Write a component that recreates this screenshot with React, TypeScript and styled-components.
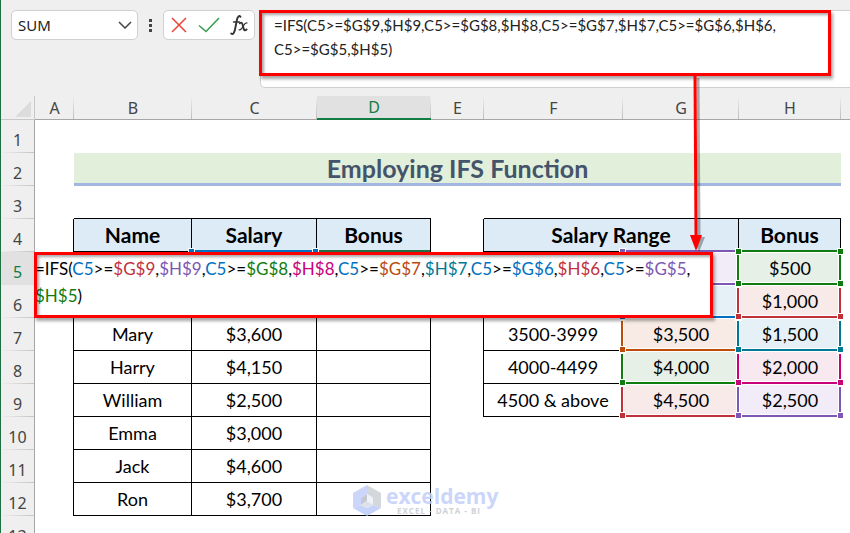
import React from "react";
import styled, { createGlobalStyle, css } from "styled-components";

const GlobalStyle = createGlobalStyle`
  *, *::before, *::after { box-sizing: border-box; }
  body { margin: 0; background: #fff; font-family: Lato, sans-serif; color: #000; }
  button, input, textarea { font: inherit; color: inherit; border: 0; background: none; padding: 0; margin: 0; outline: none; }
`;

const cellFont = "Lato, sans-serif";
const uiFont = '"Noto Sans", sans-serif';

const Window = styled.div`
  height: 100vh;
  overflow: hidden;
  display: flex;
  flex-direction: column;
  border-left: 1px solid #1e7145;
`;

const Toolbar = styled.header`
  display: flex;
  align-items: flex-start;
  padding: 10px 0 8px 10px;
  background: #efefef;
`;

const Panel = styled.div`
  display: flex;
  align-items: center;
  height: 30px;
  background: #fff;
  border: 1px solid #d0d0d0;
  border-radius: 5px;
`;

const NameBox = styled(Panel)`
  width: 127px;
  padding: 0 5px 0 6px;
`;

const NameInput = styled.input`
  flex: 1;
  min-width: 0;
  font-family: ${uiFont};
  font-size: 15px;
  color: #222;
`;

const IconButton = styled.button`
  display: flex;
  align-items: center;
  justify-content: center;
  flex: none;
  height: 28px;
`;

const Dots = styled.div`
  display: flex;
  flex-direction: column;
  gap: 2px;
  padding: 9px 11px 0;
  i { width: 3px; height: 3px; background: #444; }
`;

const Actions = styled(Panel)`
  width: 92px;
  padding: 0 6px;
  justify-content: space-between;
`;

const FormulaBar = styled.div`
  position: relative;
  flex: 1;
  height: 78px;
  margin-left: 5px;
  background: #fff;
  border: 1px solid #d0d0d0;
  border-right: 0;
  border-radius: 5px 0 0 5px;
`;

const FormulaText = styled.textarea`
  display: block;
  width: 100%;
  height: 70px;
  padding: 2px 0 0 13px;
  resize: none;
  overflow: hidden;
  white-space: pre;
  font-family: ${cellFont};
  font-size: 15px;
  line-height: 24px;
  color: #222;
`;

const redFrame = css`
  border: 3px solid #fe0000;
  box-shadow: 2px 3px 3px rgba(0, 0, 0, 0.35), inset 2px 2px 3px rgba(0, 0, 0, 0.35);
  pointer-events: none;
`;

const FormulaFrame = styled.div`
  position: absolute;
  z-index: 60;
  inset: -1px 19px 11px -2px;
  ${redFrame}
`;

const Arrow = styled.svg`
  position: absolute;
  top: 100%;
  left: 424px;
  overflow: visible;
`;

const Sheet = styled.table`
  width: 100%;
  table-layout: fixed;
  border-collapse: separate;
  border-spacing: 0;
  th, td { padding: 0; }
`;

const ColHead = styled.th<{ $active?: boolean; $last?: boolean }>`
  height: 24px;
  font-family: ${uiFont};
  font-weight: 400;
  font-size: 16px;
  line-height: 20px;
  color: ${(p) => (p.$active ? "#107c41" : "#444")};
  background-color: ${(p) => (p.$active ? "#e1e1e1" : "#efefef")};
  background-image: ${(p) => (p.$last ? "none" : "linear-gradient(#efefef, #bdbdbd)")};
  background-size: 1px 100%;
  background-position: right top;
  background-repeat: no-repeat;
  border-bottom: ${(p) => (p.$active ? "2px solid #107c41" : "1px solid #a6a6a6")};
`;

const Corner = styled.th`
  height: 24px;
  background: #efefef;
  border-right: 1px solid #c8c8c8;
  border-bottom: 1px solid #c8c8c8;
  svg { display: block; margin: 3px 3px 0 auto; }
`;

const RowHead = styled.th<{ $active?: boolean }>`
  height: 33px;
  vertical-align: bottom;
  font-family: ${uiFont};
  font-weight: 400;
  font-size: 16px;
  line-height: 26px;
  color: ${(p) => (p.$active ? "#107c41" : "#444")};
  background: ${(p) =>
    p.$active
      ? "#e1e1e1"
      : "linear-gradient(90deg, #efefef, #c4c4c4) left bottom / 100% 1px no-repeat #efefef"};
  border-right: 1px solid #a6a6a6;
`;

type CellProps = { $right?: boolean; $bottom?: boolean; $tint?: string; $z?: number };

const Cell = styled.td<CellProps>`
  position: relative;
  ${(p) => p.$z !== undefined && `z-index: ${p.$z};`}
  height: 33px;
  font-family: ${cellFont};
  font-size: 18px;
  line-height: 24px;
  text-align: center;
  white-space: nowrap;
  background: ${(p) => p.$tint || "#fff"};
  border-right: ${(p) => (p.$right ? "1px solid #000" : "0")};
  border-bottom: ${(p) => (p.$bottom ? "1px solid #000" : "0")};
`;

const HeadCell = styled(Cell).attrs({ as: "th", $right: true, $bottom: true, $tint: "#ddebf7" })`
  font-size: 21px;
  font-weight: 700;
`;

const TitleCell = styled(Cell)`
  background: #e2efda;
  border-bottom: 3px solid #a2b6e1;
  color: #44546a;
  font-size: 25px;
  font-weight: 700;
`;

const Ring = styled.span<{ $color: string }>`
  position: absolute;
  inset: -2px 0 -1px -2px;
  border: 2px solid ${(p) => p.$color};
  box-shadow: inset 0 0 0 1px #fff;
  pointer-events: none;
`;

const Handle = styled.i<{ $color: string; $corner: "tl" | "tr" | "bl" | "br" }>`
  position: absolute;
  width: 7px;
  height: 7px;
  background: ${(p) => p.$color};
  border: 1px solid #fff;
  ${(p) => (p.$corner[0] === "t" ? "top: -4px;" : "bottom: -3px;")}
  ${(p) => (p.$corner[1] === "l" ? "left: -4px;" : "right: -3px;")}
`;

const Editor = styled.div`
  position: absolute;
  z-index: 50;
  top: 0;
  left: -1px;
  width: 679px;
  height: 66px;
  padding: 3px 0 0 1px;
  background: #fff;
  text-align: left;
  font-size: 17px;
  line-height: 27px;
  white-space: pre;
  &::after { content: ""; position: absolute; inset: 0; ${redFrame} }
`;

const Ref = styled.span<{ $color: string }>`
  color: ${(p) => p.$color};
`;

const Watermark = styled.div`
  position: absolute;
  z-index: 5;
  top: 2px;
  left: 36px;
  display: flex;
  align-items: flex-start;
  gap: 5px;
  opacity: 0.85;
  text-align: left;
`;

const Brand = styled.div`
  font-family: "Open Sans", sans-serif;
  font-weight: 700;
  font-size: 21px;
  line-height: 22px;
  color: #c3d0fa;
`;

const Tagline = styled.div`
  padding-left: 11px;
  font-family: "Open Sans", sans-serif;
  font-weight: 700;
  font-size: 8px;
  line-height: 8px;
  letter-spacing: 1px;
  color: #c6cad0;
`;

const C = {
  blue: "#0070c0",
  red: "#c0313a",
  purple: "#7e57b4",
  green: "#107c10",
  magenta: "#c8007a",
  orange: "#bc4b0c",
  teal: "#007a94",
};

const tint = {
  red: "#f8eae8",
  purple: "#f2ecf8",
  green: "#e6f0e6",
  magenta: "#f8e8ef",
  orange: "#f8ebe5",
  teal: "#e5f1f7",
};

const columns = [39, 118, 125, 114, 53, 139, 116, 102];

const names: Record<number, [string, string]> = {
  7: ["Mary", "$3,600"],
  8: ["Harry", "$4,150"],
  9: ["William", "$2,500"],
  10: ["Emma", "$3,000"],
  11: ["Jack", "$4,600"],
  12: ["Ron", "$3,700"],
};

type RefCell = { text: string; color: string; fill: string };

const ranges: Record<number, { label: string; g: RefCell; h: RefCell }> = {
  5: { label: "", g: { text: "", color: C.purple, fill: tint.purple }, h: { text: "$500", color: C.green, fill: tint.green } },
  6: { label: "", g: { text: "", color: C.blue, fill: tint.teal }, h: { text: "$1,000", color: C.red, fill: tint.red } },
  7: { label: "3500-3999", g: { text: "$3,500", color: C.orange, fill: tint.orange }, h: { text: "$1,500", color: C.teal, fill: tint.teal } },
  8: { label: "4000-4499", g: { text: "$4,000", color: C.green, fill: tint.green }, h: { text: "$2,000", color: C.magenta, fill: tint.magenta } },
  9: { label: "4500 & above", g: { text: "$4,500", color: C.red, fill: tint.red }, h: { text: "$2,500", color: C.purple, fill: tint.purple } },
};

const terms: [string, string, string, string][] = [
  ["$G$9", C.red, "$H$9", C.purple],
  ["$G$8", C.green, "$H$8", C.magenta],
  ["$G$7", C.orange, "$H$7", C.teal],
  ["$G$6", C.blue, "$H$6", C.red],
  ["$G$5", C.purple, "$H$5", C.green],
];

function Outline({ color }: { color: string }) {
  return (
    <>
      <Ring $color={color} />
      <Handle $color={color} $corner="tl" />
      <Handle $color={color} $corner="tr" />
      <Handle $color={color} $corner="bl" />
      <Handle $color={color} $corner="br" />
    </>
  );
}

function CellEditor() {
  return (
    <Editor role="textbox" aria-label="Cell D5">
      =IFS(
      {terms.map(([g, gc, h, hc], i) => (
        <React.Fragment key={g}>
          <Ref $color={C.blue}>C5</Ref>&gt;=<Ref $color={gc}>{g}</Ref>,{i === 4 && "\n"}
          <Ref $color={hc}>{h}</Ref>{i === 4 ? ")" : ","}
        </React.Fragment>
      ))}
    </Editor>
  );
}

function Logo() {
  return (
    <svg width="28" height="31" viewBox="0 0 28 31" aria-hidden="true">
      <path d="M14 0 28 8v15l-8-3v-7l-6-4z" fill="#cdd1d6" />
      <path d="M14 0 0 8v15l8-3v-7l6-4z" fill="#c3d0fa" />
      <path d="M0 23l8-3 6 3 6-3 8 3-14 8z" fill="#bccbfa" />
      <path d="M14 9 8 13v7l6-4z" fill="#b9bfc9" />
      <path d="M14 9l6 4v7l-6-4z" fill="#edf0f7" />
      <path d="M8 20l6-4 6 4-6 3z" fill="#d9dde4" />
    </svg>
  );
}

function SheetRow({ row }: { row: number }) {
  const person = names[row];
  const range = ranges[row];
  const inNames = row >= 5 && row <= 12;
  return (
    <tr>
      <RowHead scope="row" $active={row === 5}>{row}</RowHead>
      <Cell $right={inNames} $z={row === 5 ? 50 : undefined}>{row === 5 && <CellEditor />}</Cell>
      <Cell $right={inNames} $bottom={inNames}>{person?.[0]}</Cell>
      <Cell $right={inNames} $bottom={inNames} $z={row === 5 ? 12 : undefined}>
        {person?.[1]}
        {row === 5 && <Outline color={C.blue} />}
      </Cell>
      <Cell $right={inNames} $bottom={inNames} $z={row === 5 ? 11 : row === 12 ? 5 : undefined}>
        {row === 5 && <Ring $color="#1e7145" />}
        {row === 12 && (
          <Watermark>
            <Logo />
            <div>
              <Brand>exceldemy</Brand>
              <Tagline>EXCEL - DATA - BI</Tagline>
            </div>
          </Watermark>
        )}
      </Cell>
      <Cell $right={!!range} />
      <Cell $right={!!range} $bottom={!!range}>{range?.label}</Cell>
      {range ? (
        <>
          <Cell $tint={range.g.fill} $z={30 - row * 2} $bottom>
            {range.g.text}
            <Outline color={range.g.color} />
          </Cell>
          <Cell $tint={range.h.fill} $z={31 - row * 2} $bottom>
            {range.h.text}
            <Outline color={range.h.color} />
          </Cell>
        </>
      ) : (
        <>
          <Cell />
          <Cell />
        </>
      )}
      <Cell />
    </tr>
  );
}

export default function App() {
  return (
    <Window>
      <GlobalStyle />
      <Toolbar>
        <NameBox>
          <NameInput aria-label="Name box" defaultValue="SUM" />
          <IconButton aria-label="Open name list">
            <svg width="14" height="8" viewBox="0 0 14 8" fill="none" stroke="#444" strokeWidth="1.5">
              <path d="M1 1l6 6 6-6" />
            </svg>
          </IconButton>
        </NameBox>
        <Dots><i /><i /><i /></Dots>
        <Actions>
          <IconButton aria-label="Cancel">
            <svg width="18" height="16" viewBox="0 0 18 16" fill="none" stroke="#ea4335" strokeWidth="1.5">
              <path d="M2 1l14 14M16 1L2 15" />
            </svg>
          </IconButton>
          <IconButton aria-label="Enter">
            <svg width="22" height="16" viewBox="0 0 22 16" fill="none" stroke="#3a9e52" strokeWidth="1.6">
              <path d="M1 8.500l7 6L21 1" />
            </svg>
          </IconButton>
          <IconButton aria-label="Insert function">
            <svg width="18" height="20" viewBox="0 0 18 20" fill="none" stroke="#333" strokeLinecap="round">
              <path d="M10.500 1.800C9.200 .2 7.600 1.500 7 4.500L5 14.500C4.300 18 2.900 19.800 1.200 18.500" strokeWidth="1.900" />
              <path d="M3.500 7h6" strokeWidth="1.300" />
              <path d="M9.800 8.300c1.500-1.200 2.200-.6 2.700 1l1.200 4.600c.5 1.600 1.500 1.900 2.900.6" strokeWidth="1.900" />
              <path d="M17 8c-1.400-.6-2.400.5-3.700 3.100-1.400 2.900-2.400 4.400-4.200 3.700" strokeWidth="1.200" />
            </svg>
          </IconButton>
        </Actions>
        <FormulaBar>
          <FormulaText
            aria-label="Formula bar"
            spellCheck={false}
            defaultValue={
              "=IFS(C5>=$G$9,$H$9,C5>=$G$8,$H$8,C5>=$G$7,$H$7,C5>=$G$6,$H$6,\nC5>=$G$5,$H$5)"
            }
          />
          <FormulaFrame>
            <Arrow width="20" height="180" viewBox="0 0 20 180" aria-hidden="true">
              <g opacity="0.3" transform="translate(3 2)">
                <path d="M9 3L10 162" stroke="#000" strokeWidth="3" />
                <path d="M4 162h12l-6 15z" fill="#000" />
              </g>
              <path d="M9 0L10 162" stroke="#fe0000" strokeWidth="3" />
              <path d="M4 162h12l-6 16z" fill="#fe0000" />
            </Arrow>
          </FormulaFrame>
        </FormulaBar>
      </Toolbar>
      <Sheet>
        <colgroup>
          <col width={34} />
          {columns.map((w, i) => (
            <col key={i} width={w} />
          ))}
          <col />
        </colgroup>
        <thead>
          <tr>
            <Corner aria-label="Select all">
              <svg width="16" height="16" viewBox="0 0 16 16" aria-hidden="true">
                <path d="M16 0v16H0z" fill="#dcdcdc" />
              </svg>
            </Corner>
            {"ABCDEFGH".split("").map((c) => (
              <ColHead key={c} scope="col" $active={c === "D"}>{c}</ColHead>
            ))}
            <ColHead $last />
          </tr>
        </thead>
        <tbody>
          <SheetRow row={1} />
          <tr>
            <RowHead scope="row">2</RowHead>
            <Cell />
            <TitleCell colSpan={7}>Employing IFS Function</TitleCell>
            <Cell />
          </tr>
          <tr>
            <RowHead scope="row">3</RowHead>
            <Cell />
            <Cell $bottom />
            <Cell $bottom />
            <Cell $bottom />
            <Cell />
            <Cell $bottom />
            <Cell $bottom />
            <Cell $bottom />
            <Cell />
          </tr>
          <tr>
            <RowHead scope="row">4</RowHead>
            <Cell $right />
            <HeadCell>Name</HeadCell>
            <HeadCell>Salary</HeadCell>
            <HeadCell>Bonus</HeadCell>
            <Cell $right />
            <HeadCell colSpan={2}>Salary Range</HeadCell>
            <HeadCell>Bonus</HeadCell>
            <Cell />
          </tr>
          {[5, 6, 7, 8, 9, 10, 11, 12, 13].map((row) => (
            <SheetRow key={row} row={row} />
          ))}
        </tbody>
      </Sheet>
    </Window>
  );
}
